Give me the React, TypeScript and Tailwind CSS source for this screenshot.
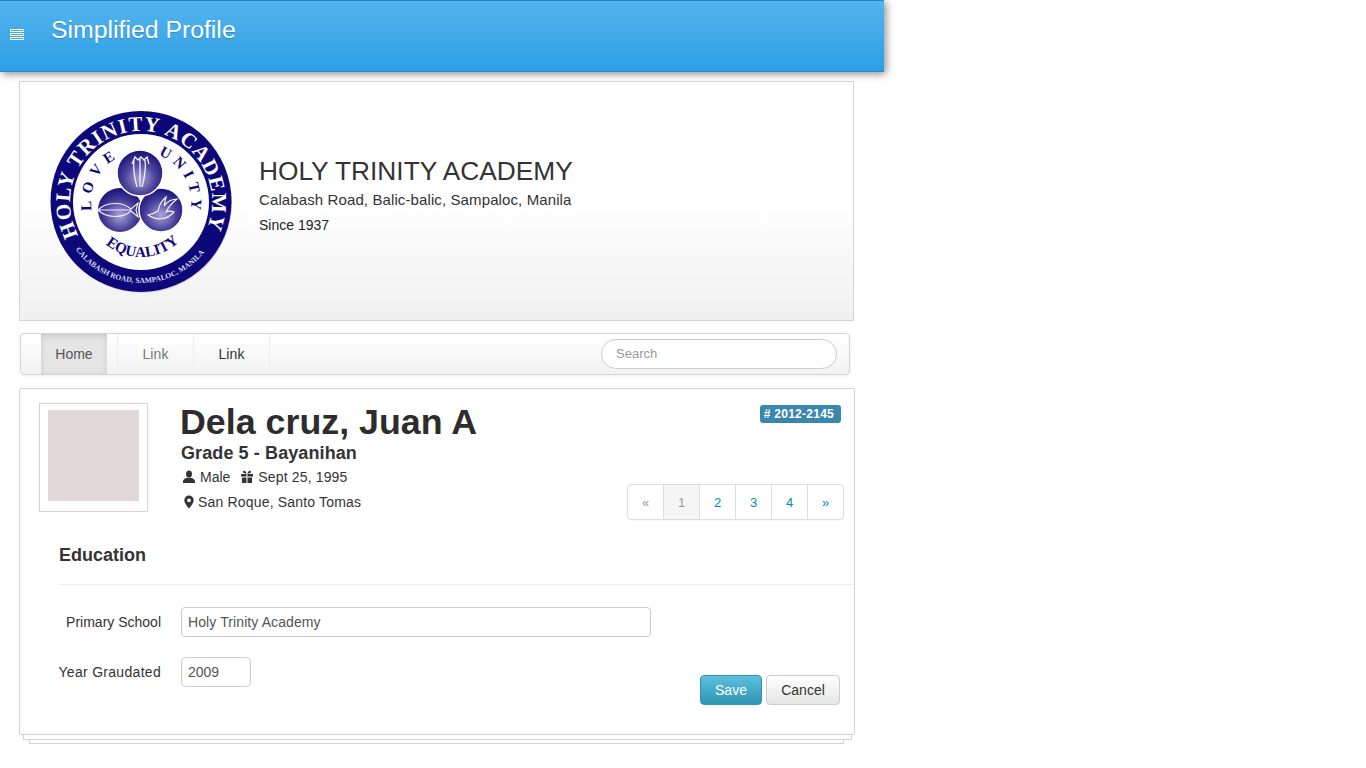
import { useState } from "react"

const sans = "font-['Liberation_Sans',Arial,sans-serif]"

function Logo() {
    return (
        <svg width="186" height="188" viewBox="0 0 186 188" className="shrink-0">
            <defs>
                <radialGradient id="ball" cx="0.5" cy="0.62" r="0.62">
                    <stop offset="0" stopColor="#aaa5d8" />
                    <stop offset="0.55" stopColor="#4a4199" />
                    <stop offset="1" stopColor="#15107a" />
                </radialGradient>
                <path id="outerTop" d="M 28.3 125.300 A 71 71 0 1 1 153.700 125.300" />
                <path id="innerLove" d="M 41.800 100.700 A 50 50 0 0 1 66 48.700" />
                <path id="innerUnity" d="M 108.100 45 A 50 50 0 0 1 141 96.400" />
                <path id="innerBottom" d="M 55.600 134.100 A 55 55 0 0 0 126.400 134.100" />
                <path id="rimBottom" d="M 25.500 139.600 A 81 81 0 0 0 156.500 139.600" />
            </defs>
            <circle cx="92" cy="93" r="90" fill="#e6d3dc" />
            <circle cx="91" cy="91.500" r="90.500" fill="#0d0879" />
            <circle cx="91" cy="92" r="68" fill="#ffffff" />
            <circle cx="70" cy="100" r="22" fill="url(#ball)" />
            <circle cx="111" cy="100" r="22" fill="url(#ball)" stroke="#fff" strokeWidth="1.5" />
            <circle cx="90" cy="63" r="23" fill="url(#ball)" stroke="#fff" strokeWidth="1.5" />
            {/* praying hands */}
            <path d="M84 50c-1 8 0 16 3 27m3-28v28m5-27c1 8 0 16-3 27m-10-23 3-7 3 3 3-3 3 3 3-3 2 7" fill="none" stroke="#f2f0fa" strokeWidth="1.3" />
            {/* fish */}
            <path d="M48 100c8-8 24-9 33-1l7-6-2 7 2 7-7-6c-9 8-25 7-33-1Zm0 0h33" fill="none" stroke="#f2f0fa" strokeWidth="1.1" />
            {/* dove */}
            <path d="M98 105c8 5 18 6 26-3-3-1-6-1-8 0 3-6 6-9 11-13-6 0-10 3-13 7l2-9c-5 4-7 9-8 14-3 2-6 3-10 4Z" fill="none" stroke="#f2f0fa" strokeWidth="1.2" />
            <text className="font-['Liberation_Serif',serif]" fontSize="21" fontWeight="700" fill="#fff" letterSpacing="0.9">
                <textPath href="#outerTop">HOLY TRINITY ACADEMY</textPath>
            </text>
            <text className="font-['Liberation_Serif',serif]" fontSize="15" fontWeight="700" fill="#0d0879" letterSpacing="6">
                <textPath href="#innerLove">LOVE</textPath>
            </text>
            <text className="font-['Liberation_Serif',serif]" fontSize="15" fontWeight="700" fill="#0d0879" letterSpacing="5">
                <textPath href="#innerUnity">UNITY</textPath>
            </text>
            <text className="font-['Liberation_Serif',serif]" fontSize="15" fontWeight="700" fill="#0d0879">
                <textPath href="#innerBottom">EQUALITY</textPath>
            </text>
            <text className="font-['Liberation_Serif',serif]" fontSize="7.6" fontWeight="700" fill="#d8d6ee">
                <textPath href="#rimBottom">CALABASH ROAD, SAMPALOC, MANILA</textPath>
            </text>
        </svg>
    )
}

function UserIcon() {
    return (
        <svg width="14" height="14" viewBox="0 0 14 14" fill="#333">
            <ellipse cx="7" cy="4" rx="3" ry="3.600" />
            <path d="M1 13v-1.600C1 9.200 3.200 8.500 5 7.800h4c1.800.7 4 1.400 4 3.600V13Z" />
        </svg>
    )
}

function GiftIcon() {
    return (
        <svg width="14" height="14" viewBox="0 0 14 14" fill="#333">
            <path d="M1 4h5.500v2.600H1ZM7.500 4H13v2.600H7.500ZM2 7.400h4.500V13H2ZM7.500 7.400H12V13H7.500Z" />
            <path d="M6.600 3.600C5 3.600 3 3.200 3 2s1.200-1.400 2-.9c.8.5 1.300 1.600 1.600 2.500ZM7.400 3.600c1.600 0 3.600-.4 3.600-1.600s-1.200-1.400-2-.9c-.8.5-1.300 1.600-1.600 2.500Z" />
        </svg>
    )
}

function PinIcon() {
    return (
        <svg width="14" height="14" viewBox="0 0 14 14">
            <path fillRule="evenodd" fill="#333" d="M7 .5a4.700 4.700 0 0 1 4.700 4.700C11.700 8.500 7 13.500 7 13.500S2.300 8.500 2.300 5.200A4.700 4.700 0 0 1 7 .5Zm0 2.900a1.900 1.900 0 1 0 0 3.800 1.900 1.900 0 0 0 0-3.800Z" />
        </svg>
    )
}

function MenuIcon() {
    return (
        <svg width="14" height="14" viewBox="0 0 14 14" fill="none" stroke="#fff">
            <rect x="0.500" y="2.500" width="13" height="2" />
            <rect x="0.500" y="6.500" width="13" height="2" />
            <rect x="0.500" y="10.500" width="13" height="2" />
        </svg>
    )
}

const pages = ["«", "1", "2", "3", "4", "»"]

export default function App() {
    const [school, setSchool] = useState("Holy Trinity Academy")
    const [year, setYear] = useState("2009")

    return (
        <div className={`${sans} w-[884px] text-[#333] bg-white`}>
            {/* top bar */}
            <header className="h-[72px] flex items-start bg-gradient-to-b from-[#53b4ee] to-[#2b9fe4] border-t border-t-[#2089cc] border-b border-b-[#2389c9] shadow-[2px_2px_8px_rgba(0,0,0,0.45)]">
                <div className="w-[51px] pl-[10px] pt-[26px]">
                    <MenuIcon />
                </div>
                <h1 className="text-[24.8px] leading-[26px] pt-[16px] text-white [text-shadow:0_1px_1px_rgba(0,0,0,0.2)]">Simplified Profile</h1>
            </header>

            {/* school banner */}
            <section className="ml-[19px] mt-[9px] w-[835px] h-[240px] border border-[#d4d4d4] bg-gradient-to-b from-white from-50% to-[#f0f0f0] flex items-start pl-[30px] pt-[28px]">
                <Logo />
                <div className="ml-[23px] pt-[44px]">
                    <div className="text-[26.300px] leading-[34px] font-normal">HOLY TRINITY ACADEMY</div>
                    <div className="text-[15px] leading-[22px] mt-[1px] tracking-[0.11px]">Calabash Road, Balic-balic, Sampaloc, Manila</div>
                    <div className="text-[14px] leading-[20px] mt-[4px] text-[#222]">Since 1937</div>
                </div>
            </section>

            {/* nav */}
            <nav className="ml-[20px] mt-[12px] w-[830px] h-[42px] border border-[#d4d4d4] rounded-[4px] bg-gradient-to-b from-white to-[#f2f2f2] shadow-[0_1px_4px_rgba(0,0,0,0.07)] flex items-stretch pl-[20px] pr-[12px]">
                <a className="w-[66px] flex items-center justify-center text-[14px] text-[#555] bg-[#e5e5e5] shadow-[inset_0_2px_6px_rgba(0,0,0,0.12)]">Home</a>
                <div className="w-[11px] border-r border-[#ededed]" />
                <a className="w-[76px] flex items-center justify-center text-[14px] text-[#777] border-r border-[#ededed] tracking-[0.1px]">Link</a>
                <a className="w-[76px] flex items-center justify-center text-[14px] text-[#333] border-r border-[#ededed] tracking-[0.1px]">Link</a>
                <div className="flex-1 flex items-center justify-end">
                    <input
                        placeholder="Search"
                        className="w-[236px] h-[30px] rounded-[15px] bg-white border border-[#ccc] pl-[14px] pr-[14px] pb-[2px] text-[13px] outline-none placeholder:text-[#999]"
                    />
                </div>
            </nav>

            {/* profile card */}
            <section className="ml-[19px] mt-[13px] w-[836px] h-[347px] bg-white border border-[#d4d4d4] rounded-[2px]">
                <div className="flex items-start pl-[19px] pt-[14px] pr-[10px]">
                    <div className="w-[109px] h-[109px] border border-[#d4d4d4] pl-[8px] pt-[6px] shrink-0">
                        <div className="w-[91px] h-[91px] bg-[#e0d8d9]" />
                    </div>
                    <div className="ml-[32px] flex-1">
                        <h2 className="text-[35.800px] leading-[38px] font-bold text-[#2d2d2d]">Dela cruz, Juan A</h2>
                        <h3 className="ml-[1px] mt-[1px] text-[18px] leading-[22px] font-bold tracking-[0.1px]">Grade 5 - Bayanihan</h3>
                        <div className="ml-[2px] mt-[3px] flex items-center text-[14px] leading-[20px] h-[20px]">
                            <UserIcon />
                            <span className="ml-[4px]">Male</span>
                            <span className="ml-[10px]"><GiftIcon /></span>
                            <span className="ml-[4px] tracking-[0.15px]">Sept 25, 1995</span>
                        </div>
                        <div className="ml-[2px] mt-[5px] flex items-center text-[14px] leading-[20px] h-[20px] tracking-[0.18px]">
                            <PinIcon />
                            <span className="ml-[2px]">San Roque, Santo Tomas</span>
                        </div>
                    </div>
                    <div className="flex flex-col items-end shrink-0 self-stretch">
                        <span className="mt-[2px] mr-[3px] h-[18px] pl-[4px] pr-[7px] rounded-[3px] bg-[#3a87ad] text-white text-[12px] leading-[18px] font-bold tracking-[0.25px]">
                            # 2012-2145
                        </span>
                        <div className="mt-[61px] flex h-[36px] border border-[#ddd] rounded-[4px] shadow-[0_1px_2px_rgba(0,0,0,0.05)]">
                            {pages.map((p, i) => (
                                <span
                                    key={p}
                                    className={
                                        i === 0
                                            ? "w-[36px] pt-[1px] flex items-center justify-center text-[13px] text-[#999] border-r border-[#ddd]"
                                            : i === 1
                                            ? "w-[36px] pt-[1px] flex items-center justify-center text-[13px] text-[#999] bg-[#f5f5f5] border-r border-[#ddd]"
                                            : i === 5
                                            ? "w-[35px] pt-[1px] flex items-center justify-center text-[13px] text-[#0088cc]"
                                            : "w-[36px] pt-[1px] flex items-center justify-center text-[13px] text-[#0088cc] border-r border-[#ddd]"
                                    }
                                >
                                    {p}
                                </span>
                            ))}
                        </div>
                    </div>
                </div>

                {/* education */}
                <div className="ml-[39px] mt-[18px] pb-[16px] border-b border-[#eee]">
                    <h4 className="text-[18px] leading-[34px] h-[27px] font-bold">Education</h4>
                    <div className="h-[3px]" />
                </div>

                <div className="mt-[22px] flex items-center h-[30px]">
                    <label className="w-[141px] text-right text-[14px]">Primary School</label>
                    <input
                        value={school}
                        onChange={(e) => setSchool(e.target.value)}
                        className="ml-[20px] w-[470px] h-[30px] border border-[#ccc] rounded-[4px] px-[6px] text-[14px] text-[#555] outline-none tracking-[0.1px]"
                    />
                </div>

                <div className="mt-[20px] flex items-center h-[30px]">
                    <label className="w-[141px] text-right text-[14px] tracking-[0.3px]">Year Graudated</label>
                    <input
                        value={year}
                        onChange={(e) => setYear(e.target.value)}
                        className="ml-[20px] w-[70px] h-[30px] border border-[#ccc] rounded-[4px] px-[6px] text-[14px] text-[#555] outline-none"
                    />
                    <div className="ml-auto mr-[14px] mt-[36px] flex gap-[4px]">
                        <button className="w-[62px] h-[30px] rounded-[4px] border border-[#2f96b4] bg-gradient-to-b from-[#5bc0de] to-[#2f96b4] text-white text-[14px]">Save</button>
                        <button className="w-[74px] h-[30px] rounded-[4px] border border-[#ccc] bg-gradient-to-b from-white to-[#e6e6e6] text-[#333] text-[14px]">Cancel</button>
                    </div>
                </div>
            </section>

            {/* stacked sheets under the card */}
            <div className="ml-[23px] w-[829px] h-[5px] border border-t-0 border-[#d4d4d4]" />
            <div className="ml-[29px] w-[815px] h-[4px] border border-t-0 border-[#d4d4d4]" />
        </div>
    )
}
